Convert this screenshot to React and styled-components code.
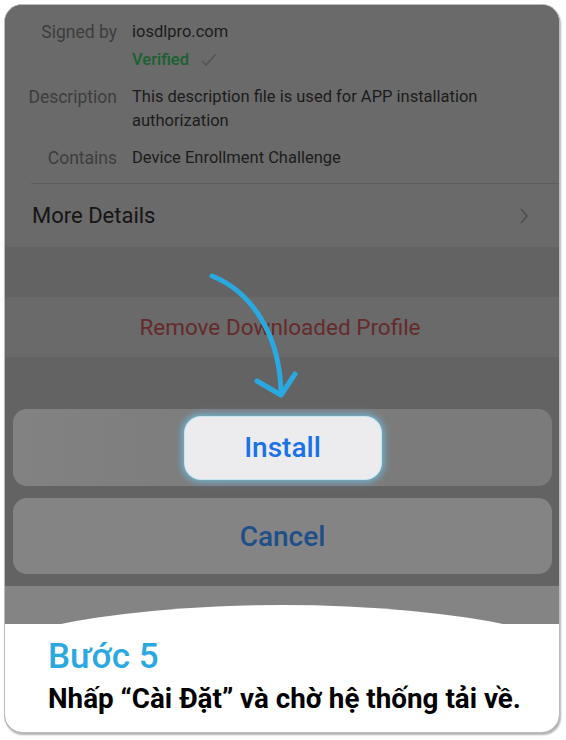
import React from 'react';
import styled, { createGlobalStyle } from 'styled-components';

const GlobalStyle = createGlobalStyle`
  html, body {
    margin: 0;
    padding: 0;
    background: #fff;
  }
  body {
    font-family: Roboto, "Liberation Sans", Arial, sans-serif;
  }
`;

const Page = styled.div`
  padding: 4px 6px 8px 4px;
  width: 566px;
  box-sizing: border-box;
`;

const Card = styled.div`
  position: relative;
  height: 727px;
  border: 1.5px solid #bdbdbd;
  border-radius: 18px;
  overflow: hidden;
  box-shadow: 1px 2px 2px rgba(0, 0, 0, 0.3);
  display: flex;
  flex-direction: column;
  background: #6a6a6a;
  & > * {
    flex-shrink: 0;
  }
`;

const InfoSection = styled.div`
  background: #6a6a6a;
  padding-top: 15px;
`;

const DetailGrid = styled.div`
  display: grid;
  grid-template-columns: 112px 1fr;
  column-gap: 15px;
  row-gap: 13px;
  font-size: 16.5px;
  line-height: 24px;
  padding-right: 40px;
`;

const Label = styled.div`
  text-align: right;
  color: #3d3d3d;
  white-space: nowrap;
  font-size: 17.5px;
`;

const Value = styled.div`
  color: #1c1c1c;
`;

const Verified = styled.div`
  margin-top: 4px;
  color: #19612f;
  font-weight: 500;
  display: flex;
  align-items: center;
  gap: 12px;
`;

const Separator = styled.div`
  height: 1px;
  background: #5c5c5c;
  margin: 13px 0 0 26px;
`;

const MoreRow = styled.div`
  height: 63px;
  display: flex;
  align-items: center;
  justify-content: space-between;
  padding: 0 30px 0 27px;
  font-size: 22px;
  color: #151515;
`;

const GroupGap = styled.div`
  height: ${(p) => p.h}px;
  background: #636363;
`;

const RemoveRow = styled.div`
  height: 60px;
  display: flex;
  align-items: center;
  justify-content: center;
  font-size: 22.5px;
  color: #652b2b;
  background: #6a6a6a;
  padding-right: 4px;
`;

const ActionArea = styled.div`
  background: #636363;
  padding: 52px 7px 12px 8px;
  display: flex;
  flex-direction: column;
  gap: 12px;
`;

const Sheet = styled.div`
  height: ${(p) => p.h}px;
  border-radius: 14px;
  background: ${(p) => p.bg};
  display: flex;
  align-items: center;
  justify-content: center;
`;

const InstallButton = styled.div`
  width: 196px;
  height: 62px;
  border-radius: 16px;
  background: #ececef;
  display: flex;
  align-items: center;
  justify-content: center;
  font-size: 28px;
  font-weight: 500;
  color: #1a72e6;
  box-shadow: 0 0 0 1px #c4e6f5, 0 0 7px 3px rgba(110, 200, 240, 0.75);
`;

const CancelText = styled.span`
  font-size: 28px;
  font-weight: 500;
  color: #1e4f88;
`;

const Band = styled.div`
  position: relative;
  height: 38px;
  background: #848484;
  overflow: hidden;
  &::after {
    content: '';
    position: absolute;
    left: -10%;
    width: 120%;
    top: 19px;
    height: 150px;
    border-radius: 50%;
    background: #fff;
  }
`;

const Footer = styled.div`
  flex: 1 1 auto;
  background: #fff;
  padding: 13px 0 0 43px;
`;

const StepTitle = styled.div`
  font-size: 35px;
  line-height: 40px;
  font-weight: 500;
  color: #2aa9e1;
`;

const StepText = styled.div`
  margin-top: 6px;
  font-size: 27.8px;
  line-height: 32px;
  font-weight: 700;
  color: #000;
  white-space: nowrap;
`;

const ArrowSvg = styled.svg`
  position: absolute;
  left: 185px;
  top: 255px;
  width: 120px;
  height: 150px;
  pointer-events: none;
`;

const App = () => (
  <>
    <GlobalStyle />
    <Page>
      <Card>
        <InfoSection>
          <DetailGrid>
            <Label>Signed by</Label>
            <Value>
              iosdlpro.com
              <Verified>
                Verified
                <svg width="16" height="14" viewBox="0 0 16 14">
                  <polyline points="1,8 5,12 15,1" fill="none" stroke="#555" strokeWidth="1.6" />
                </svg>
              </Verified>
            </Value>
            <Label>Description</Label>
            <Value>This description file is used for APP installation authorization</Value>
            <Label>Contains</Label>
            <Value>Device Enrollment Challenge</Value>
          </DetailGrid>
          <Separator />
          <MoreRow>
            <span>More Details</span>
            <svg width="10" height="16" viewBox="0 0 10 16">
              <polyline points="2,1 8,8 2,15" fill="none" stroke="#4e4e4e" strokeWidth="1.6" />
            </svg>
          </MoreRow>
        </InfoSection>
        <GroupGap h={50} />
        <RemoveRow>Remove Downloaded Profile</RemoveRow>
        <ActionArea>
          <Sheet h={77} bg="linear-gradient(90deg, #828282 0%, #7c7c7c 40%, #7b7b7b 100%)">
            <InstallButton>Install</InstallButton>
          </Sheet>
          <Sheet h={76} bg="#848484">
            <CancelText>Cancel</CancelText>
          </Sheet>
        </ActionArea>
        <Band />
        <Footer>
          <StepTitle>Bước 5</StepTitle>
          <StepText>Nhấp “Cài Đặt” và chờ hệ thống tải về.</StepText>
        </Footer>
        <ArrowSvg viewBox="190 260 120 150">
          <path
            d="M212 276 C252 292, 280 335, 281 393"
            fill="none"
            stroke="#2aa9e1"
            strokeWidth="5"
            strokeLinecap="round"
          />
          <polyline
            points="257,381 281,395 295,374"
            fill="none"
            stroke="#2aa9e1"
            strokeWidth="5"
            strokeLinecap="round"
            strokeLinejoin="round"
          />
        </ArrowSvg>
      </Card>
    </Page>
  </>
);

export default App;
